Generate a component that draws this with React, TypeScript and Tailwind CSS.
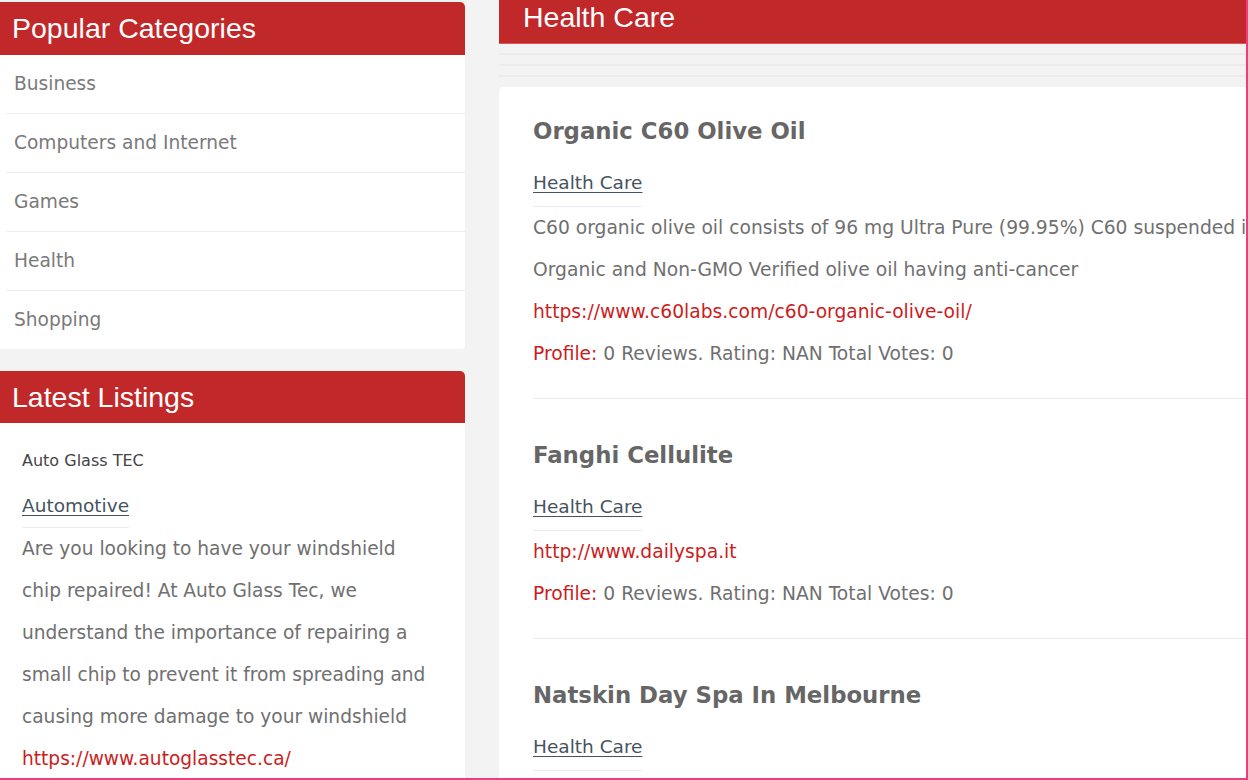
import React from "react";

const body = { fontFamily: '"DejaVu Sans", Verdana, sans-serif' };
const head = { fontFamily: '"Liberation Sans", Arial, sans-serif' };

function Entry({
  title,
  desc,
  url,
  first,
  last,
}: {
  title: string;
  desc?: string[];
  url?: string;
  first?: boolean;
  last?: boolean;
}) {
  return (
    <div className={first ? "pt-[23px]" : "pt-[35px]"}>
      <div className="text-[22.8px] font-bold leading-[42px] text-[#666] whitespace-nowrap">{title}</div>
      <div className="mt-[10px]">
        <span className="inline-block border-b border-[#ececec] pb-[2px] text-[18.5px] leading-[42px] text-[#46535f] underline underline-offset-[3px]">
          Health Care
        </span>
      </div>
      {desc && (
        <div className="text-[18.7px] leading-[42px] text-[#707070] whitespace-nowrap">
          {desc.map((d) => (
            <div key={d}>{d}</div>
          ))}
        </div>
      )}
      {url && (
        <>
          <div className="text-[18.7px] leading-[42px] text-[#cc1d1d] whitespace-nowrap">{url}</div>
          <div className="text-[18.7px] leading-[42px] text-[#707070] whitespace-nowrap">
            <span className="text-[#cc1d1d]">Profile:</span> 0 Reviews. Rating: NAN Total Votes: 0
          </div>
        </>
      )}
      {!last && <div className="mt-[23px] h-px bg-[#ebebeb]" />}
    </div>
  );
}

export default function App() {
  return (
    <div
      className="box-border flex h-[780px] w-[1248px] gap-[34px] overflow-hidden border-b-2 border-r-2 border-[#e8407a] bg-[#f3f3f3]"
      style={body}
    >
      {/* Left column */}
      <div className="flex w-[465px] shrink-0 flex-col pt-[2px]">
        <div className="rounded-tr-[5px] bg-[#c1282a]">
          <div className="h-[53px] pl-[12px] text-[28.5px] leading-[53px] text-white" style={head}>
            Popular Categories
          </div>
        </div>
        <div className="rounded-br-[4px] bg-white">
          {["Business", "Computers and Internet", "Games", "Health", "Shopping"].map((c, i, a) => (
            <div key={c} className={i < a.length - 1 ? "ml-[6px] border-b border-[#eeeeee]" : "ml-[6px]"}>
              <div className="h-[58px] pl-[8px] text-[18.6px] leading-[58px] text-[#7a7a7a]">{c}</div>
            </div>
          ))}
        </div>
        <div className="mt-[10px] h-px bg-[#ebebeb]" />
        <div className="mt-[12px] rounded-tr-[5px] bg-[#c1282a]">
          <div className="h-[52px] pl-[12px] text-[28.5px] leading-[52px] text-white" style={head}>
            Latest Listings
          </div>
        </div>
        <div className="flex-1 bg-white pl-[22px] pr-[20px]">
          <div className="pt-[23px] text-[16px] leading-[30px] text-[#444]">Auto Glass TEC</div>
          <div className="mt-[9px]">
            <span className="inline-block border-b border-[#ececec] text-[18.5px] leading-[42px] text-[#46535f] underline underline-offset-[3px]">
              Automotive
            </span>
          </div>
          <div className="text-[18.6px] leading-[42px] text-[#707070] whitespace-nowrap">
            <div>Are you looking to have your windshield</div>
            <div>chip repaired! At Auto Glass Tec, we</div>
            <div>understand the importance of repairing a</div>
            <div>small chip to prevent it from spreading and</div>
            <div>causing more damage to your windshield</div>
            <div className="text-[#cc1d1d]">https://www.autoglasstec.ca/</div>
          </div>
        </div>
      </div>

      {/* Right column */}
      <div className="flex min-w-0 flex-1 flex-col">
        <div className="h-[44px] border-b border-[#d9595b] bg-[#c1282a] pl-[24px] text-[28.5px] leading-[34px] text-white" style={head}>
          Health Care
        </div>
        <div className="flex h-[43px] flex-col">
          <div className="mt-[9px] h-[2px] bg-[#ebebeb]" />
          <div className="mt-[9px] h-[2px] bg-[#ebebeb]" />
          <div className="mt-[9px] h-[2px] bg-[#ebebeb]" />
        </div>
        <div className="flex-1 overflow-hidden rounded-tl-[5px] bg-white pl-[34px]">
          <Entry
            first
            title="Organic C60 Olive Oil"
            desc={[
              "C60 organic olive oil consists of 96 mg Ultra Pure (99.95%) C60 suspended in",
              "Organic and Non-GMO Verified olive oil having anti-cancer",
            ]}
            url="https://www.c60labs.com/c60-organic-olive-oil/"
          />
          <Entry title="Fanghi Cellulite" url="http://www.dailyspa.it" />
          <Entry title="Natskin Day Spa In Melbourne" last />
        </div>
      </div>
    </div>
  );
}
